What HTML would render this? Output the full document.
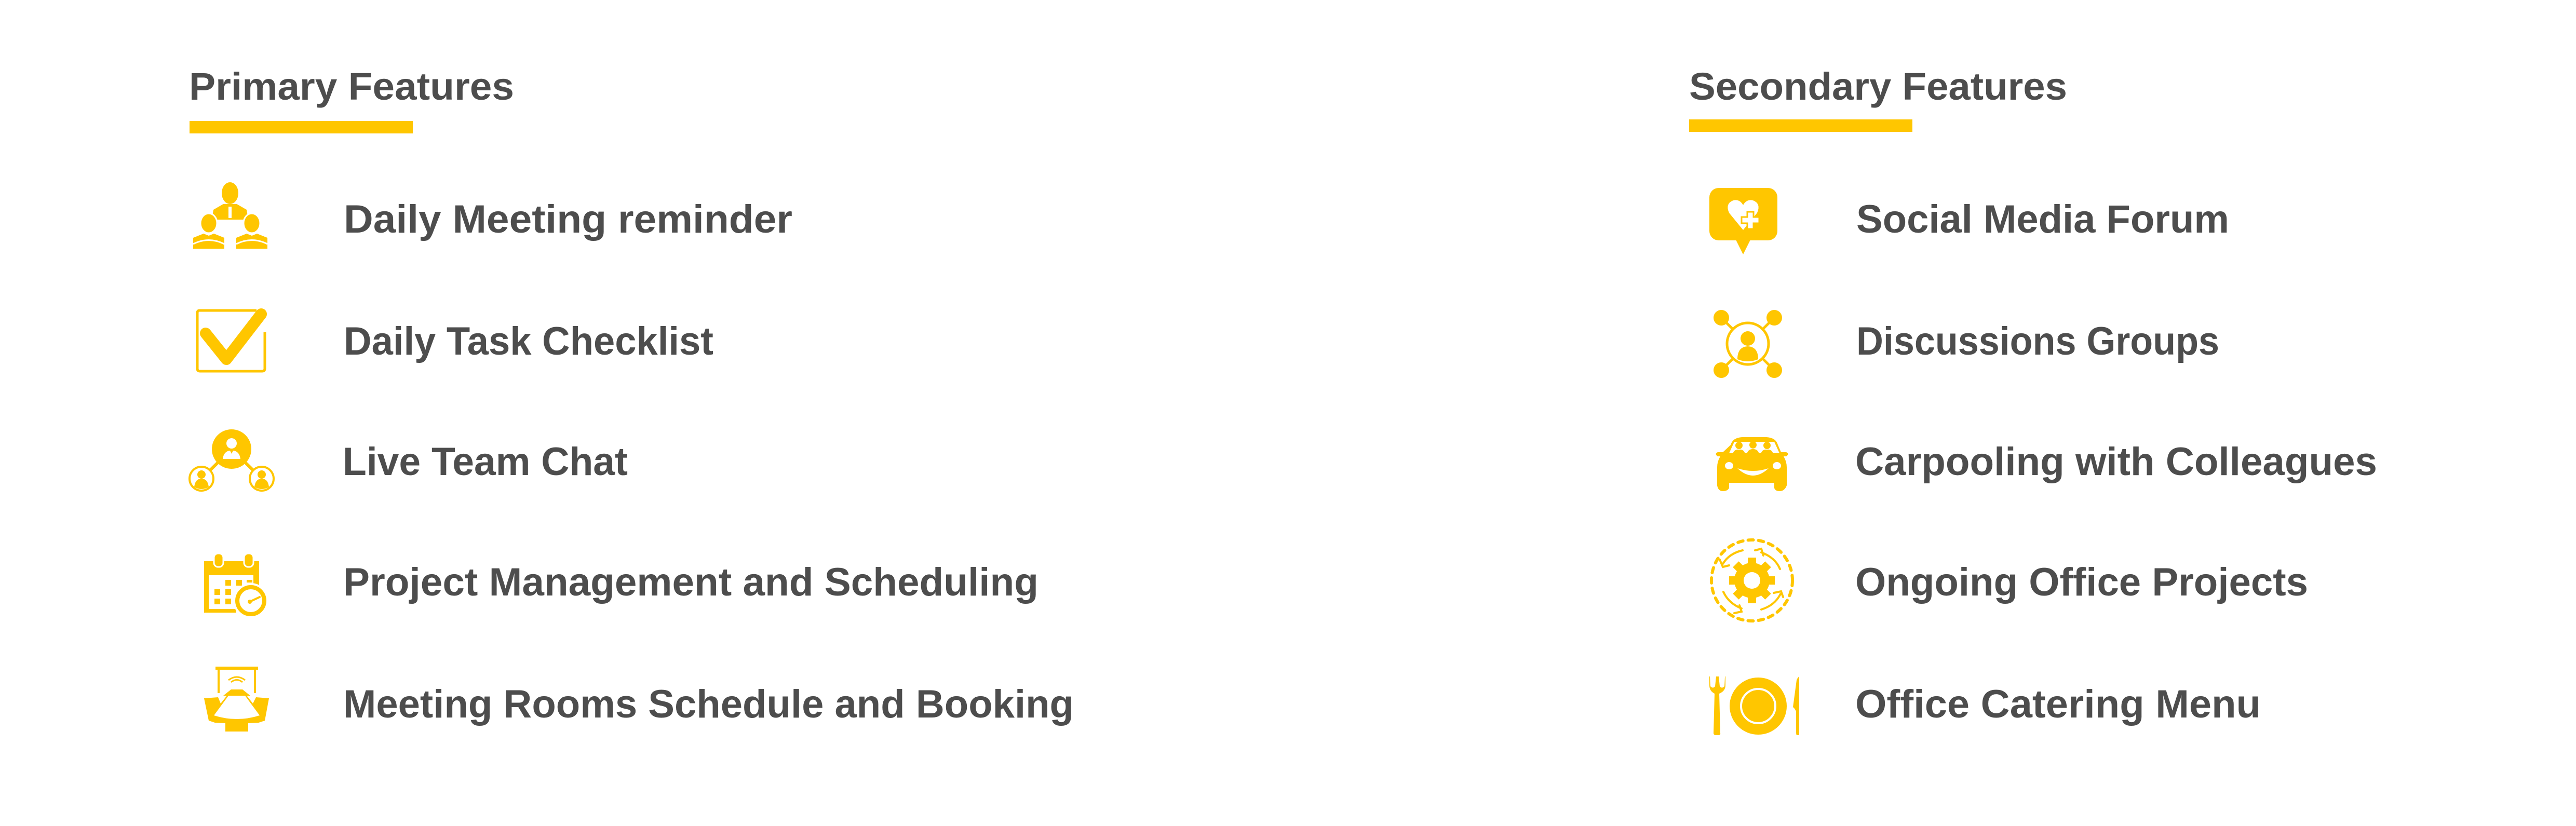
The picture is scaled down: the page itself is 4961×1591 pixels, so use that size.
<!DOCTYPE html>
<html><head><meta charset="utf-8"><style>
html,body{margin:0;padding:0;background:#fff;}
svg{display:block;}
text{font-family:"Liberation Sans",sans-serif;font-weight:bold;fill:#4d4d4d;}
</style></head><body>
<svg width="4961" height="1591" viewBox="0 0 4961 1591" xmlns="http://www.w3.org/2000/svg">
<rect width="4961" height="1591" fill="#fff"/>
<!-- headings -->
<text x="364" y="192" font-size="74" textLength="626" lengthAdjust="spacingAndGlyphs">Primary Features</text>
<rect x="365" y="233" width="430" height="24" fill="#FFC600"/>
<text x="3253" y="192" font-size="74" textLength="728" lengthAdjust="spacingAndGlyphs">Secondary Features</text>
<rect x="3253" y="230" width="430" height="24" fill="#FFC600"/>
<!-- primary items -->
<g font-size="76">
<text x="662" y="448" textLength="864" lengthAdjust="spacingAndGlyphs">Daily Meeting reminder</text>
<text x="662" y="683" textLength="712" lengthAdjust="spacingAndGlyphs">Daily Task Checklist</text>
<text x="660" y="915" textLength="549" lengthAdjust="spacingAndGlyphs">Live Team Chat</text>
<text x="661" y="1147" textLength="1339" lengthAdjust="spacingAndGlyphs">Project Management and Scheduling</text>
<text x="661" y="1382" textLength="1407" lengthAdjust="spacingAndGlyphs">Meeting Rooms Schedule and Booking</text>
<text x="3575" y="448" textLength="718" lengthAdjust="spacingAndGlyphs">Social Media Forum</text>
<text x="3575" y="683" textLength="699" lengthAdjust="spacingAndGlyphs">Discussions Groups</text>
<text x="3573" y="915" textLength="1005" lengthAdjust="spacingAndGlyphs">Carpooling with Colleagues</text>
<text x="3573" y="1147" textLength="872" lengthAdjust="spacingAndGlyphs">Ongoing Office Projects</text>
<text x="3573" y="1382" textLength="781" lengthAdjust="spacingAndGlyphs">Office Catering Menu</text>
</g>
<g fill="#FFC600">
<!-- meeting icon -->
<ellipse cx="443" cy="372" rx="16" ry="21"/>
<path d="M408 423 L411 404 L430 393 L456 393 L475 404 L478 423 Z"/>
<rect x="440" y="398" width="6" height="22" fill="#fff"/>
<ellipse cx="402" cy="430" rx="16" ry="19" stroke="#fff" stroke-width="3"/>
<ellipse cx="485" cy="430" rx="16" ry="19" stroke="#fff" stroke-width="3"/>
<path d="M372 479 L372 458 L392 450 L402 454 L412 450 L432 458 L432 479 Z"/>
<path d="M455 479 L455 458 L475 450 L485 454 L495 450 L515 458 L515 479 Z"/>
<path d="M372 470 Q402 455 432 470" fill="none" stroke="#fff" stroke-width="3"/>
<path d="M455 470 Q485 455 515 470" fill="none" stroke="#fff" stroke-width="3"/>
<!-- checklist -->
<path d="M494 598 L384 598 Q380 598 380 603 L380 710 Q380 715 385 715 L505 715 Q510 715 510 710 L510 640" fill="none" stroke="#FFC600" stroke-width="5"/>
<path d="M396 642 L436 692 L503 605" fill="none" stroke="#FFC600" stroke-width="22" stroke-linecap="round" stroke-linejoin="round"/>
<!-- chat -->
<line x1="446" y1="865" x2="388" y2="922" stroke="#FFC600" stroke-width="6"/>
<line x1="446" y1="865" x2="504" y2="922" stroke="#FFC600" stroke-width="6"/>
<circle cx="446" cy="865" r="38"/>
<circle cx="446" cy="854" r="10" fill="#fff"/>
<path d="M429 884 Q431 869 443 868 L446 874 L449 868 Q461 869 463 884 Z" fill="#fff"/>
<circle cx="388" cy="922" r="23" fill="#fff" stroke="#FFC600" stroke-width="4"/>
<circle cx="504" cy="922" r="23" fill="#fff" stroke="#FFC600" stroke-width="4"/>
<circle cx="388" cy="914" r="8"/><path d="M374 938 Q376 922 388 922 Q400 922 402 938 Q388 946 374 938Z"/>
<circle cx="504" cy="914" r="8"/><path d="M490 938 Q492 922 504 922 Q516 922 518 938 Q504 946 490 938Z"/>
<!-- calendar -->
<path d="M393 1081 L499 1081 L499 1130 L480 1127 L455 1160 L455 1180 L393 1180 Z"/>
<rect x="402" y="1108" width="86" height="65" fill="#fff"/>
<rect x="412" y="1066" width="18" height="26" rx="8" stroke="#fff" stroke-width="3"/>
<rect x="470" y="1066" width="18" height="26" rx="8" stroke="#fff" stroke-width="3"/>
<rect x="434" y="1117" width="11" height="11"/><rect x="455" y="1117" width="11" height="11"/><rect x="475" y="1117" width="11" height="5"/>
<rect x="413" y="1135" width="11" height="11"/><rect x="434" y="1135" width="11" height="11"/>
<rect x="413" y="1153" width="11" height="11"/><rect x="434" y="1153" width="11" height="11"/>
<circle cx="483" cy="1157" r="32" stroke="#fff" stroke-width="4"/>
<circle cx="483" cy="1157" r="22" fill="#fff"/>
<path d="M481 1159 L500 1150" stroke="#FFC600" stroke-width="4" stroke-linecap="round"/><circle cx="481" cy="1159" r="4"/>
<!-- meeting rooms -->
<rect x="415" y="1284" width="82" height="6"/>
<rect x="419" y="1289" width="4" height="46"/><rect x="489" y="1289" width="4" height="46"/>
<path d="M440 1310 Q456 1298 472 1310" fill="none" stroke="#FFC600" stroke-width="3"/>
<path d="M445 1314 Q456 1305 467 1314" fill="none" stroke="#FFC600" stroke-width="3"/>
<path d="M393 1345 L420 1343 L425 1355 L440 1336 L472 1336 L487 1355 L493 1343 L518 1345 L510 1388 L498 1392 L478 1393 L478 1409 L434 1409 L434 1393 L414 1392 L402 1388 Z"/>
<path d="M430 1340 L445 1328 L467 1328 L482 1340 Z"/>
<path d="M440 1340 L472 1340 L500 1378 Q456 1392 412 1378 Z" fill="#fff"/>
<!-- social -->
<rect x="3292" y="362" width="131" height="101" rx="18"/>
<path d="M3343 462 L3371 462 L3357 490 Z"/>
<path d="M3357 443 L3330 410 Q3322 392 3338 386 Q3350 383 3357 395 Q3364 383 3376 386 Q3392 392 3384 410 Z" fill="#fff"/>
<path d="M3365 408 L3377 408 L3377 418 L3388 418 L3388 430 L3377 430 L3377 441 L3365 441 L3365 430 L3354 430 L3354 418 L3365 418 Z" fill="#fff" stroke="#FFC600" stroke-width="3"/>
<!-- discussions -->
<g stroke="#FFC600" stroke-width="5">
<line x1="3315" y1="612" x2="3417" y2="713"/><line x1="3417" y1="612" x2="3315" y2="713"/>
</g>
<circle cx="3366" cy="662" r="40" fill="#fff" stroke="#FFC600" stroke-width="5"/>
<circle cx="3315" cy="612" r="15"/><circle cx="3417" cy="612" r="15"/><circle cx="3315" cy="713" r="15"/><circle cx="3417" cy="713" r="15"/>
<circle cx="3366" cy="652" r="14"/>
<path d="M3346 692 Q3346 668 3366 667 Q3386 668 3386 692 Q3366 700 3346 692 Z"/>
<!-- car -->
<path d="M3333 857 Q3337 843 3355 842 L3402 842 Q3420 843 3424 857 L3430 871 L3440 871 Q3447 874 3440 879 L3435 879 Q3441 889 3441 900 L3441 935 Q3437 946 3427 946 Q3419 946 3417 940 L3417 930 L3330 930 L3330 940 Q3327 946 3318 946 Q3309 946 3307 935 L3307 900 Q3307 889 3313 879 L3308 879 Q3301 874 3308 871 L3318 871 Z"/>
<path d="M3330 873 L3340 851 L3417 851 L3427 873 Z" fill="#fff"/>
<circle cx="3349" cy="858" r="7"/><circle cx="3376" cy="857" r="7"/><circle cx="3403" cy="858" r="7"/>
<path d="M3337 875 Q3339 865 3349 866 Q3359 865 3361 875 Z M3364 875 Q3366 865 3376 865 Q3386 865 3388 875 Z M3391 875 Q3393 865 3403 866 Q3413 865 3415 875 Z"/>
<ellipse cx="3330" cy="897" rx="8" ry="7" fill="#fff"/><ellipse cx="3422" cy="897" rx="8" ry="7" fill="#fff"/>
<path d="M3346 902 Q3376 912 3406 902 Q3376 930 3346 902 Z" fill="#fff"/>
<!-- gear -->
<circle cx="3374" cy="1118" r="78" fill="none" stroke="#FFC600" stroke-width="6" stroke-dasharray="10 10" stroke-linecap="round"/>
<g transform="translate(3374 1118)">
<g>
<rect x="-8" y="-44" width="16" height="88"/>
<rect x="-8" y="-44" width="16" height="88" transform="rotate(45)"/>
<rect x="-8" y="-44" width="16" height="88" transform="rotate(90)"/>
<rect x="-8" y="-44" width="16" height="88" transform="rotate(135)"/>
</g>
<circle r="34"/>
<circle r="16" fill="#fff"/>
<g fill="none" stroke="#FFC600" stroke-width="4" stroke-linecap="round">
<path d="M-18 -58 Q-44 -52 -56 -32"/><path d="M18 -54 Q45 -44 54 -22"/>
<path d="M-55 22 Q-45 44 -20 54"/><path d="M18 56 Q44 48 55 26"/>
<path d="M-62 -40 L-56 -26 L-44 -29"/><path d="M6 -58 L18 -61 L22 -48"/>
<path d="M-24 48 L-20 60 L-34 63"/><path d="M42 24 L56 21 L60 32"/>
</g>
</g>
<!-- catering -->
<path d="M3292 1303 L3292 1320 Q3292 1331 3302 1336 L3300 1412 Q3300 1416 3305 1416 L3309 1416 Q3314 1416 3313 1412 L3311 1336 Q3323 1331 3323 1320 L3323 1303 L3322 1303 L3321 1322 Q3316 1327 3312 1322 L3310 1303 L3305 1303 L3303 1322 Q3299 1327 3294 1322 L3293 1303 Z"/>
<circle cx="3386" cy="1360" r="55"/>
<circle cx="3386" cy="1360" r="33" fill="none" stroke="#fff" stroke-width="4"/>
<path d="M3465 1303 L3465 1416 L3460 1416 Q3459 1414 3459 1410 L3459 1370 Q3456 1364 3453 1362 L3460 1310 Q3462 1305 3465 1303 Z"/>
</g>
</svg>
</body></html>
